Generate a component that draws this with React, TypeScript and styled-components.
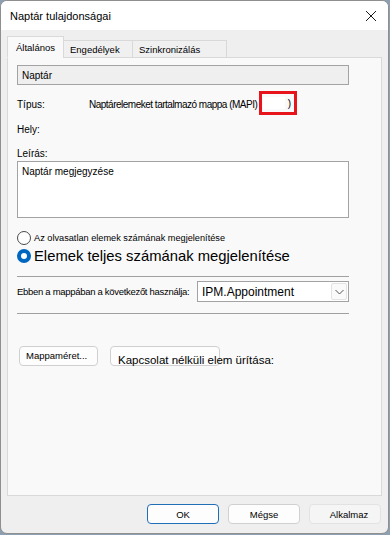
import React from 'react';
import styled, { createGlobalStyle } from 'styled-components';

const GlobalStyle = createGlobalStyle`
  html, body {
    margin: 0;
    padding: 0;
    background: #8e9fb1;
  }
  body {
    font-family: "Liberation Sans", Arial, sans-serif;
    color: #000;
  }
`;

const SCWindow = styled.div`
  box-sizing: border-box;
  width: 389px;
  height: 534px;
  display: flex;
  flex-direction: column;
  background: #efefef;
  border: 1px solid #8f8f8f;
  border-radius: 7px;
  overflow: hidden;
`;

const SCTitleBar = styled.div`
  height: 29px;
  flex: none;
  display: flex;
  align-items: center;
  justify-content: space-between;
  padding: 0 9px 0 9px;
  background: #ffffff;
  font-size: 11px;
`;

const SCCloseButton = styled.div`
  width: 14px;
  height: 14px;
  display: flex;
  align-items: center;
  justify-content: center;
  margin-right: 1px;
`;

const SCBody = styled.div`
  flex: 1;
  display: flex;
  flex-direction: column;
  padding: 7px 6px 0 6px;
`;

const SCTabStrip = styled.div`
  height: 21px;
  display: flex;
  align-items: flex-end;
  position: relative;
  z-index: 1;
  margin-bottom: -1px;
`;

const SCTab = styled.div<{ active?: boolean; width: number }>`
  box-sizing: border-box;
  width: ${(p) => p.width}px;
  height: ${(p) => (p.active ? 22 : 18)}px;
  display: flex;
  align-items: center;
  padding-left: ${(p) => (p.active ? 8 : 6)}px;
  padding-top: ${(p) => (p.active ? 1 : 0)}px;
  font-size: 9.5px;
  background: ${(p) => (p.active ? '#f9f9f9' : '#f0f0f0')};
  border: 1px solid #d9d9d9;
  border-bottom: ${(p) => (p.active ? '1px solid #f9f9f9' : '1px solid #d9d9d9')};
  margin-left: ${(p) => (p.active ? 0 : -1)}px;
`;

const SCPanel = styled.div`
  box-sizing: border-box;
  height: 439px;
  flex: none;
  width: 375px;
  background: #f9f9f9;
  border: 1px solid #d9d9d9;
  padding: 7px 0 0 9px;
  display: flex;
  flex-direction: column;
`;

const SCNameBox = styled.div`
  box-sizing: border-box;
  width: 332px;
  height: 20px;
  background: #efefef;
  border: 1px solid #a3a3a3;
  font-size: 10px;
  padding-left: 4px;
  display: flex;
  align-items: center;
`;

const SCInfoRow = styled.div<{ top: number; height?: number }>`
  margin-top: ${(p) => p.top}px;
  height: ${(p) => p.height ?? 20}px;
  display: flex;
  align-items: flex-end;
  font-size: 10px;
  position: relative;
`;

const SCInfoLabel = styled.div`
  width: 72px;
  line-height: 20px;
`;

const SCInfoValue = styled.div`
  line-height: 20px;
  letter-spacing: -0.5px;
  white-space: nowrap;
`;

const SCHighlight = styled.div`
  position: absolute;
  left: 242px;
  bottom: 0;
  box-sizing: border-box;
  width: 38px;
  height: 24px;
  border: 3px solid #e8141c;
  display: flex;
  align-items: center;
  justify-content: flex-end;
  padding-right: 3px;
  font-size: 10px;
  background: #f9f9f9;
`;

const SCHighlightFill = styled.span`
  display: inline-block;
  width: 22px;
  height: 12px;
  background: #ffffff;
  margin-right: 3px;
`;

const SCFieldLabel = styled.div`
  margin-top: 7px;
  font-size: 10px;
  line-height: 14px;
`;

const SCTextArea = styled.div`
  box-sizing: border-box;
  width: 332px;
  height: 57px;
  background: #ffffff;
  border: 1px solid #a3a3a3;
  padding: 4px 4px;
  font-size: 10px;
`;

const SCRadioRow = styled.div<{ top: number; big?: boolean }>`
  margin-top: ${(p) => p.top}px;
  display: flex;
  align-items: center;
  gap: 3px;
  font-size: ${(p) => (p.big ? 14.8 : 9.2)}px;
  line-height: ${(p) => (p.big ? 18 : 14)}px;
  white-space: nowrap;
`;

const SCRadio = styled.span<{ checked?: boolean }>`
  box-sizing: border-box;
  width: 14px;
  height: 14px;
  flex: none;
  border-radius: 50%;
  background: ${(p) => (p.checked ? '#0067c0' : '#ffffff')};
  border: ${(p) => (p.checked ? 'none' : '1px solid #4a4a4a')};
  display: flex;
  align-items: center;
  justify-content: center;

  &::after {
    content: '';
    display: ${(p) => (p.checked ? 'block' : 'none')};
    width: 6px;
    height: 6px;
    border-radius: 50%;
    background: #ffffff;
  }
`;

const SCSeparator = styled.div<{ top: number }>`
  margin-top: ${(p) => p.top}px;
  width: 332px;
  height: 1px;
  background: #a0a0a0;
`;

const SCComboRow = styled.div`
  margin-top: 4px;
  width: 332px;
  height: 21px;
  display: flex;
  align-items: center;
  justify-content: space-between;
`;

const SCComboLabel = styled.span`
  font-size: 9.5px;
  letter-spacing: -0.3px;
  white-space: nowrap;
`;

const SCCombo = styled.div`
  box-sizing: border-box;
  width: 152px;
  height: 21px;
  background: #ffffff;
  border: 1px solid #a3a3a3;
  display: flex;
  align-items: center;
  justify-content: space-between;
  padding: 0 1px 0 4px;
  font-size: 12px;
`;

const SCComboArrow = styled.div`
  box-sizing: border-box;
  width: 16px;
  height: 17px;
  border: 1px solid #e3e3e3;
  border-radius: 2px;
  background: #fafafa;
  display: flex;
  align-items: center;
  justify-content: center;
`;

const SCActionRow = styled.div`
  margin-top: 32px;
  display: flex;
  gap: 12px;
  padding-left: 2px;
`;

const SCActionButton = styled.div<{ width: number; large?: boolean }>`
  box-sizing: border-box;
  width: ${(p) => p.width}px;
  height: 20px;
  background: #fdfdfd;
  border: 1px solid #d0d0d0;
  border-radius: 4px;
  display: flex;
  align-items: ${(p) => (p.large ? 'flex-start' : 'center')};
  padding-left: ${(p) => (p.large ? 7 : 6)}px;
  padding-top: ${(p) => (p.large ? 6 : 0)}px;
  font-size: ${(p) => (p.large ? 11.5 : 9.5)}px;
  white-space: nowrap;
  line-height: ${(p) => (p.large ? 14 : 12)}px;
`;

const SCFooter = styled.div`
  margin-top: 8px;
  display: flex;
  justify-content: flex-end;
  gap: 9px;
  padding-right: 1px;
`;

const SCFooterButton = styled.div<{ variant?: 'primary' | 'disabled' }>`
  box-sizing: border-box;
  width: 72px;
  height: 20px;
  border-radius: 4px;
  display: flex;
  align-items: center;
  justify-content: center;
  font-size: 9.5px;
  background: ${(p) => (p.variant === 'disabled' ? '#f5f5f5' : '#fdfdfd')};
  border: 1px solid
    ${(p) =>
      p.variant === 'primary'
        ? '#1f6fb8'
        : p.variant === 'disabled'
        ? '#e2e2e2'
        : '#d0d0d0'};
  padding-left: ${(p) => (p.variant === 'disabled' ? 8 : 0)}px;
`;

const tabs = [
  { label: 'Általános', width: 57, active: true },
  { label: 'Engedélyek', width: 70 },
  { label: 'Szinkronizálás', width: 95 },
];

const App: React.FC = () => {
  return (
    <>
      <GlobalStyle />
      <SCWindow>
        <SCTitleBar>
          <span>Naptár tulajdonságai</span>
          <SCCloseButton>
            <svg width="12" height="12" viewBox="0 0 12 12">
              <path d="M1 1 L11 11 M11 1 L1 11" stroke="#1a1a1a" strokeWidth="1" />
            </svg>
          </SCCloseButton>
        </SCTitleBar>

        <SCBody>
          <SCTabStrip>
            {tabs.map((t) => (
              <SCTab key={t.label} active={t.active} width={t.width}>
                {t.label}
              </SCTab>
            ))}
          </SCTabStrip>

          <SCPanel>
            <SCNameBox>Naptár</SCNameBox>

            <SCInfoRow top={7} height={23}>
              <SCInfoLabel>Típus:</SCInfoLabel>
              <SCInfoValue>Naptárelemeket tartalmazó mappa (MAPI)</SCInfoValue>
              <SCHighlight>
                <SCHighlightFill />)
              </SCHighlight>
            </SCInfoRow>

            <SCInfoRow top={5}>
              <SCInfoLabel>Hely:</SCInfoLabel>
            </SCInfoRow>

            <SCFieldLabel>Leírás:</SCFieldLabel>
            <SCTextArea>Naptár megjegyzése</SCTextArea>

            <SCRadioRow top={13}>
              <SCRadio />
              Az olvasatlan elemek számának megjelenítése
            </SCRadioRow>
            <SCRadioRow top={2} big>
              <SCRadio checked />
              Elemek teljes számának megjelenítése
            </SCRadioRow>

            <SCSeparator top={11} />

            <SCComboRow>
              <SCComboLabel>Ebben a mappában a következőt használja:</SCComboLabel>
              <SCCombo>
                <span>IPM.Appointment</span>
                <SCComboArrow>
                  <svg width="9" height="6" viewBox="0 0 9 6">
                    <path d="M0.5 1 L4.5 5 L8.5 1" fill="none" stroke="#555" strokeWidth="1" />
                  </svg>
                </SCComboArrow>
              </SCCombo>
            </SCComboRow>

            <SCSeparator top={11} />

            <SCActionRow>
              <SCActionButton width={79}>Mappaméret...</SCActionButton>
              <SCActionButton width={110} large>
                Kapcsolat nélküli elem ürítása:
              </SCActionButton>
            </SCActionRow>
          </SCPanel>

          <SCFooter>
            <SCFooterButton variant="primary">OK</SCFooterButton>
            <SCFooterButton>Mégse</SCFooterButton>
            <SCFooterButton variant="disabled">Alkalmaz</SCFooterButton>
          </SCFooter>
        </SCBody>
      </SCWindow>
    </>
  );
};

export default App;
